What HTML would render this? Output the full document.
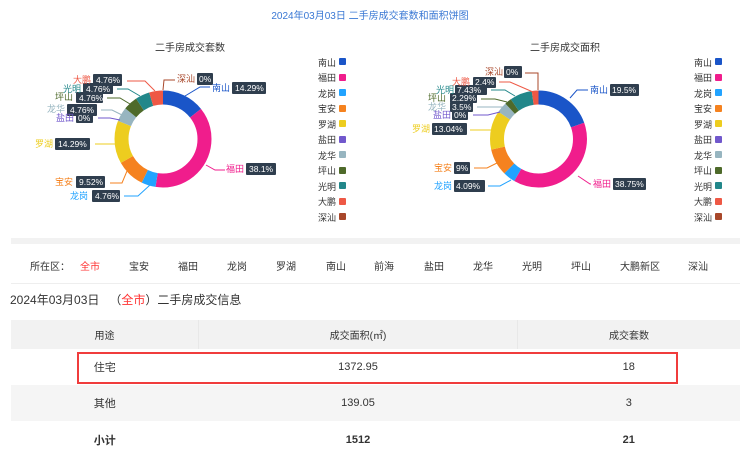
<!DOCTYPE html>
<html><head><meta charset="utf-8"><style>
body{margin:0;width:740px;height:458px;background:#fff;font-family:"Liberation Sans","Noto Sans CJK SC",sans-serif;position:relative;overflow:hidden;color:#333}
.a{position:absolute;white-space:nowrap}
svg text{font-family:"Liberation Sans","Noto Sans CJK SC",sans-serif}
table{position:absolute;left:11px;top:320px;width:729px;border-collapse:collapse;font-size:11px;color:#333}
td{text-align:center;padding:0}
</style></head><body>
<div class="a" style="left:0;width:740px;top:7px;text-align:center;font-size:10px;color:#3a78d4">2024年03月03日 二手房成交套数和面积饼图</div>
<svg class="a" style="left:0;top:0" width="740" height="240" font-size="8.5">
<text x="190" y="51" text-anchor="middle" font-size="10" fill="#333">二手房成交套数</text>
<text x="565" y="51" text-anchor="middle" font-size="10" fill="#333">二手房成交面积</text>
<g transform="rotate(-90 163 139)" fill="none" stroke-width="14">
<circle cx="163" cy="139" r="41.5" stroke="#1a55c8" stroke-dasharray="37.26 300"/>
<circle cx="163" cy="139" r="41.5" stroke="#f01d8c" stroke-dasharray="99.35 300" stroke-dashoffset="-37.26"/>
<circle cx="163" cy="139" r="41.5" stroke="#22a3ff" stroke-dasharray="12.41 300" stroke-dashoffset="-136.61"/>
<circle cx="163" cy="139" r="41.5" stroke="#f5821f" stroke-dasharray="24.82 300" stroke-dashoffset="-149.02"/>
<circle cx="163" cy="139" r="41.5" stroke="#edcd1f" stroke-dasharray="37.26 300" stroke-dashoffset="-173.84"/>
<circle cx="163" cy="139" r="41.5" stroke="#97b5c0" stroke-dasharray="12.41 300" stroke-dashoffset="-211.10"/>
<circle cx="163" cy="139" r="41.5" stroke="#4e6a2a" stroke-dasharray="12.41 300" stroke-dashoffset="-223.51"/>
<circle cx="163" cy="139" r="41.5" stroke="#22878a" stroke-dasharray="12.41 300" stroke-dashoffset="-235.92"/>
<circle cx="163" cy="139" r="41.5" stroke="#ee5845" stroke-dasharray="12.41 300" stroke-dashoffset="-248.33"/>
</g>
<g transform="rotate(-90 538.5 139)" fill="none" stroke-width="14">
<circle cx="538.5" cy="139" r="41.5" stroke="#1a55c8" stroke-dasharray="50.85 300"/>
<circle cx="538.5" cy="139" r="41.5" stroke="#f01d8c" stroke-dasharray="101.04 300" stroke-dashoffset="-50.85"/>
<circle cx="538.5" cy="139" r="41.5" stroke="#22a3ff" stroke-dasharray="10.66 300" stroke-dashoffset="-151.89"/>
<circle cx="538.5" cy="139" r="41.5" stroke="#f5821f" stroke-dasharray="23.47 300" stroke-dashoffset="-162.55"/>
<circle cx="538.5" cy="139" r="41.5" stroke="#edcd1f" stroke-dasharray="34.0 300" stroke-dashoffset="-186.02"/>
<circle cx="538.5" cy="139" r="41.5" stroke="#97b5c0" stroke-dasharray="9.13 300" stroke-dashoffset="-220.02"/>
<circle cx="538.5" cy="139" r="41.5" stroke="#4e6a2a" stroke-dasharray="5.97 300" stroke-dashoffset="-229.15"/>
<circle cx="538.5" cy="139" r="41.5" stroke="#22878a" stroke-dasharray="19.37 300" stroke-dashoffset="-235.12"/>
<circle cx="538.5" cy="139" r="41.5" stroke="#ee5845" stroke-dasharray="6.26 300" stroke-dashoffset="-254.49"/>
</g>
<g fill="none" stroke-width="1">
<polyline points="185,96 200,87 210,87" stroke="#1a55c8"/>
<polyline points="206,165 215,170 225,170" stroke="#f01d8c"/>
<polyline points="150,185 138,196 124,196" stroke="#22a3ff"/>
<polyline points="127,171 122,183 110,183" stroke="#f5821f"/>
<polyline points="115,144 95,144" stroke="#edcd1f"/>
<polyline points="122,115 112,110 101,110" stroke="#97b5c0"/>
<polyline points="120,120 110,118 98,118" stroke="#7158cc"/>
<polyline points="130,104 120,98 107,98" stroke="#4e6a2a"/>
<polyline points="140,96 128,89 117,89" stroke="#22878a"/>
<polyline points="155,91 145,81 127,81" stroke="#ee5845"/>
<polyline points="163,90 164,80 175,80" stroke="#a8472a"/>
<polyline points="570,98 577,90 588,90" stroke="#1a55c8"/>
<polyline points="578,176 590,184 591,184" stroke="#f01d8c"/>
<polyline points="511,180 500,186 488,186" stroke="#22a3ff"/>
<polyline points="497,163 487,168 474,168" stroke="#f5821f"/>
<polyline points="492,130 470,130" stroke="#edcd1f"/>
<polyline points="500,112 488,115 473,115" stroke="#7158cc"/>
<polyline points="503,107 477,107" stroke="#97b5c0"/>
<polyline points="507,102 495,99 481,99" stroke="#4e6a2a"/>
<polyline points="515,96 505,90 491,90" stroke="#22878a"/>
<polyline points="533,92 510,82 499,82" stroke="#ee5845"/>
<polyline points="538,90 538,73 525,73" stroke="#a8472a"/>
</g>
<g fill="#2f3e4e">
<rect x="232" y="82" width="34" height="12" rx="1"/><rect x="246" y="163" width="30" height="12" rx="1"/>
<rect x="92" y="190" width="28" height="12" rx="1"/><rect x="76" y="176" width="29" height="12" rx="1"/>
<rect x="55" y="138" width="35" height="12" rx="1"/><rect x="76" y="112" width="17" height="11" rx="1"/>
<rect x="67" y="104" width="30" height="12" rx="1"/><rect x="76" y="92" width="27" height="11" rx="1"/>
<rect x="83" y="83" width="30" height="11" rx="1"/><rect x="93" y="74" width="29" height="12" rx="1"/>
<rect x="197" y="73" width="16" height="12" rx="1"/>
<rect x="610" y="84" width="29" height="12" rx="1"/><rect x="613" y="178" width="33" height="12" rx="1"/>
<rect x="454" y="180" width="31" height="12" rx="1"/><rect x="454" y="162" width="16" height="12" rx="1"/>
<rect x="432" y="123" width="35" height="12" rx="1"/><rect x="452" y="110" width="16" height="10" rx="1"/>
<rect x="450" y="102" width="23" height="10" rx="1"/><rect x="450" y="93" width="27" height="10" rx="1"/>
<rect x="455" y="85" width="32" height="10" rx="1"/><rect x="473" y="77" width="23" height="11" rx="1"/>
<rect x="504" y="66" width="18" height="12" rx="1"/>
</g>
<g fill="#fff" font-size="8.5">
<text x="235" y="91">14.29%</text><text x="249" y="172">38.1%</text><text x="95" y="199">4.76%</text>
<text x="79" y="185">9.52%</text><text x="58" y="147">14.29%</text><text x="78" y="121">0%</text>
<text x="70" y="113">4.76%</text><text x="79" y="101">4.76%</text><text x="86" y="92">4.76%</text>
<text x="96" y="83">4.76%</text><text x="199" y="82">0%</text>
<text x="612" y="93">19.5%</text><text x="615" y="187">38.75%</text><text x="456" y="189">4.09%</text>
<text x="456" y="171">9%</text><text x="434" y="132">13.04%</text><text x="454" y="118">0%</text>
<text x="452" y="110">3.5%</text><text x="452" y="101">2.29%</text><text x="457" y="93">7.43%</text>
<text x="475" y="85">2.4%</text><text x="506" y="75">0%</text>
</g>
<g font-size="9">
<text x="212" y="91" fill="#1a55c8">南山</text><text x="226" y="172" fill="#f01d8c">福田</text>
<text x="70" y="199" fill="#22a3ff">龙岗</text><text x="55" y="185" fill="#f5821f">宝安</text>
<text x="35" y="147" fill="#edcd1f">罗湖</text><text x="56" y="121" fill="#7158cc">盐田</text>
<text x="47" y="112" fill="#97b5c0">龙华</text><text x="55" y="100" fill="#4e6a2a">坪山</text>
<text x="63" y="92" fill="#22878a">光明</text><text x="73" y="83" fill="#ee5845">大鹏</text>
<text x="177" y="82" fill="#a8472a">深汕</text>
<text x="590" y="93" fill="#1a55c8">南山</text><text x="593" y="187" fill="#f01d8c">福田</text>
<text x="434" y="189" fill="#22a3ff">龙岗</text><text x="434" y="171" fill="#f5821f">宝安</text>
<text x="412" y="132" fill="#edcd1f">罗湖</text><text x="433" y="118" fill="#7158cc">盐田</text>
<text x="428" y="110" fill="#97b5c0">龙华</text><text x="428" y="101" fill="#4e6a2a">坪山</text>
<text x="436" y="93" fill="#22878a">光明</text><text x="452" y="85" fill="#ee5845">大鹏</text>
<text x="485" y="75" fill="#a8472a">深汕</text>
</g>
<g font-size="9" fill="#333">
<text x="318" y="66">南山</text><text x="318" y="81">福田</text><text x="318" y="97">龙岗</text><text x="318" y="112">宝安</text><text x="318" y="128">罗湖</text><text x="318" y="143">盐田</text><text x="318" y="159">龙华</text><text x="318" y="174">坪山</text><text x="318" y="190">光明</text><text x="318" y="205">大鹏</text><text x="318" y="221">深汕</text>
<text x="694" y="66">南山</text><text x="694" y="81">福田</text><text x="694" y="97">龙岗</text><text x="694" y="112">宝安</text><text x="694" y="128">罗湖</text><text x="694" y="143">盐田</text><text x="694" y="159">龙华</text><text x="694" y="174">坪山</text><text x="694" y="190">光明</text><text x="694" y="205">大鹏</text><text x="694" y="221">深汕</text>
</g>
<g>
<rect x="339" y="58" width="7" height="7" rx="1" fill="#1a55c8"/><rect x="339" y="74" width="7" height="7" rx="1" fill="#f01d8c"/><rect x="339" y="89" width="7" height="7" rx="1" fill="#22a3ff"/><rect x="339" y="105" width="7" height="7" rx="1" fill="#f5821f"/><rect x="339" y="120" width="7" height="7" rx="1" fill="#edcd1f"/><rect x="339" y="136" width="7" height="7" rx="1" fill="#7158cc"/><rect x="339" y="151" width="7" height="7" rx="1" fill="#97b5c0"/><rect x="339" y="167" width="7" height="7" rx="1" fill="#4e6a2a"/><rect x="339" y="182" width="7" height="7" rx="1" fill="#22878a"/><rect x="339" y="198" width="7" height="7" rx="1" fill="#ee5845"/><rect x="339" y="213" width="7" height="7" rx="1" fill="#a8472a"/>
<rect x="715" y="58" width="7" height="7" rx="1" fill="#1a55c8"/><rect x="715" y="74" width="7" height="7" rx="1" fill="#f01d8c"/><rect x="715" y="89" width="7" height="7" rx="1" fill="#22a3ff"/><rect x="715" y="105" width="7" height="7" rx="1" fill="#f5821f"/><rect x="715" y="120" width="7" height="7" rx="1" fill="#edcd1f"/><rect x="715" y="136" width="7" height="7" rx="1" fill="#7158cc"/><rect x="715" y="151" width="7" height="7" rx="1" fill="#97b5c0"/><rect x="715" y="167" width="7" height="7" rx="1" fill="#4e6a2a"/><rect x="715" y="182" width="7" height="7" rx="1" fill="#22878a"/><rect x="715" y="198" width="7" height="7" rx="1" fill="#ee5845"/><rect x="715" y="213" width="7" height="7" rx="1" fill="#a8472a"/>
</g>
</svg>
<div class="a" style="left:11px;top:238px;width:729px;height:6px;background:#f2f2f2"></div>
<div class="a" style="top:258px;font-size:10px;color:#333;left:0;width:740px;height:14px">
<span class="a" style="left:30px">所在区：</span><span class="a" style="left:80px;color:#f33">全市</span><span class="a" style="left:129px">宝安</span><span class="a" style="left:178px">福田</span><span class="a" style="left:227px">龙岗</span><span class="a" style="left:276px">罗湖</span><span class="a" style="left:326px">南山</span><span class="a" style="left:374px">前海</span><span class="a" style="left:424px">盐田</span><span class="a" style="left:473px">龙华</span><span class="a" style="left:522px">光明</span><span class="a" style="left:571px">坪山</span><span class="a" style="left:620px">大鹏新区</span><span class="a" style="left:688px">深汕</span>
</div>
<div class="a" style="left:11px;top:283px;width:729px;height:1px;background:#eee"></div>
<div class="a" style="left:10px;top:291px;font-size:12px;color:#333">2024年03月03日 &nbsp;&nbsp;（<span style="color:#f33">全市</span>）二手房成交信息</div>
<table>
<tr style="height:29px;background:#f2f2f2;font-size:10px"><td style="width:187px;border-right:1px solid #e8e8e8">用途</td><td style="width:318px;border-right:1px solid #e8e8e8">成交面积(㎡)</td><td>成交套数</td></tr>
<tr style="height:36px"><td>住宅</td><td>1372.95</td><td>18</td></tr>
<tr style="height:36px;background:#f5f5f5"><td>其他</td><td>139.05</td><td>3</td></tr>
<tr style="height:38px;font-weight:bold"><td>小计</td><td>1512</td><td>21</td></tr>
</table>
<div class="a" style="left:77px;top:352px;width:597px;height:28px;border:2px solid #f03c3c"></div>
</body></html>
